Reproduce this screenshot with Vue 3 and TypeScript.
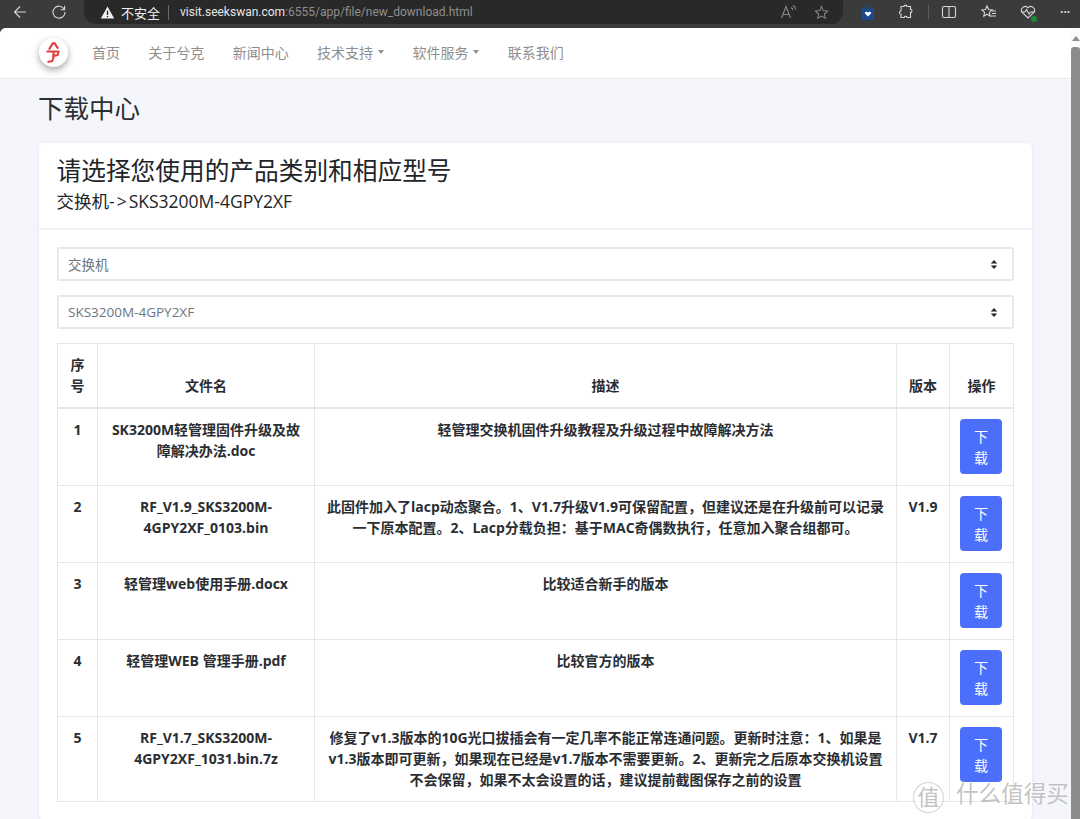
<script setup lang="ts">
interface NavItem { label: string; caret?: boolean }
interface FileRow { no: number; name: string; desc: string; version: string }

const nav: NavItem[] = [
  { label: '首页' },
  { label: '关于兮克' },
  { label: '新闻中心' },
  { label: '技术支持', caret: true },
  { label: '软件服务', caret: true },
  { label: '联系我们' },
]

const selects: string[] = ['交换机', 'SKS3200M-4GPY2XF']

const rows: FileRow[] = [
  { no: 1, name: 'SK3200M轻管理固件升级及故障解决办法.doc', desc: '轻管理交换机固件升级教程及升级过程中故障解决方法', version: '' },
  { no: 2, name: 'RF_V1.9_SKS3200M-4GPY2XF_0103.bin', desc: '此固件加入了lacp动态聚合。1、V1.7升级V1.9可保留配置，但建议还是在升级前可以记录一下原本配置。2、Lacp分载负担：基于MAC奇偶数执行，任意加入聚合组都可。', version: 'V1.9' },
  { no: 3, name: '轻管理web使用手册.docx', desc: '比较适合新手的版本', version: '' },
  { no: 4, name: '轻管理WEB 管理手册.pdf', desc: '比较官方的版本', version: '' },
  { no: 5, name: 'RF_V1.7_SKS3200M-4GPY2XF_1031.bin.7z', desc: '修复了v1.3版本的10G光口拔插会有一定几率不能正常连通问题。更新时注意：1、如果是v1.3版本即可更新，如果现在已经是v1.7版本不需要更新。2、更新完之后原本交换机设置不会保留，如果不太会设置的话，建议提前截图保存之前的设置', version: 'V1.7' },
]
</script>

<template>
  <div class="screen">
    <header class="chrome">
      <svg class="ic back" viewBox="0 0 16 16"><path d="M14 8H2.500M8 2.500 2.500 8 8 13.500" /></svg>
      <svg class="ic reload" viewBox="0 0 16 16"><path d="M13.400 5.500A6 6 0 1 0 14 8M13.600 1.800v3.900H9.800" /></svg>
      <div class="address">
        <svg class="warn" viewBox="0 0 16 16"><path d="M8 1.500 15.200 14.500H.8Z" fill="#f2f2f2" /><path d="M8 6v4.600M8 11.600v1.400" stroke="#292929" stroke-width="1.500" /></svg>
        <span class="insecure">不安全</span>
        <span class="addr-sep"></span>
        <span class="url"><b>visit.seekswan.com</b>:6555/app/file/new_download.html</span>
        <span class="grow"></span>
        <svg class="ic dim read" viewBox="0 0 18 16"><path d="M1.500 14 6 2.500 10.500 14M3 10.500h6M11 3.500c1.200.6 1.800 1.500 2 2.700M13 1.500c1.600.9 2.600 2.300 2.800 4" /></svg>
        <svg class="ic dim star" viewBox="0 0 16 16"><path d="M8 1.700 9.900 6l4.600.5-3.400 3.100 1 4.600L8 11.800l-4.100 2.400 1-4.600-3.400-3.100L6.100 6Z" /></svg>
      </div>
      <div class="tools">
        <svg class="bag" viewBox="0 0 12 15"><path d="M0 3.500h12V15H0Z" fill="#1d4a8c" /><path d="M3.800 3.500c0-3.500 4.400-3.500 4.400 0" fill="none" stroke="#1d4a8c" stroke-width="1.200" /><path d="M6 11.600 3 8.600c-.9-1.500 1.800-2.800 3-1.100 1.200-1.700 3.900-.4 3 1.100Z" fill="#fff" /></svg>
        <svg class="ic puzzle" viewBox="0 0 16 16"><path d="M6 2.500c0-1.800 3-1.800 3 0h3.500v3c1.900-.4 1.900 3.400 0 3v5H9c.3-1.700-3-1.700-2.800 0H3v-3.300c-2 .2-2-3.400 0-3.200V2.500Z" /></svg>
        <span class="tool-sep"></span>
        <svg class="ic split" viewBox="0 0 16 16"><path d="M3 2.500h10a1.500 1.500 0 0 1 1.500 1.500v8a1.500 1.500 0 0 1-1.500 1.500H3A1.500 1.500 0 0 1 1.500 12V4A1.500 1.500 0 0 1 3 2.500ZM8 2.500v11" /></svg>
        <svg class="ic favs" viewBox="0 0 16 16"><path d="M6 2 7.500 5.500l3.700.4-2.800 2.500.8 3.700L6 10.200 2.800 12.100l.8-3.700L.8 5.900l3.700-.4ZM11 7h4M11 9.500h4M10 12h5" /></svg>
        <span class="health">
          <svg class="ic" viewBox="0 0 16 16"><path d="M8 14 2.200 8.300C-.5 4.500 5 .5 8 3.800c3-3.300 8.500.7 5.800 4.500ZM1 8h4l1.500-2.500L9 10l1.500-2H15" /></svg>
          <i class="dot"></i>
        </span>
        <span class="more">···</span>
      </div>
    </header>

    <div class="viewport">
      <div class="page">
        <nav class="navbar">
          <div class="logo">
            <svg viewBox="0 0 28 28"><path d="M13.500 5 10 10.500M15 5l3 4.500M8 13h11l-1 3.500-4.500 1M14 13.500v5.500l-1.500 3.500-3.500.5" fill="none" stroke="#e23f3f" stroke-width="2" stroke-linecap="round" stroke-linejoin="round" /></svg>
          </div>
          <ul class="menu">
            <li v-for="item in nav" :key="item.label" class="menu-item">
              {{ item.label }}<span v-if="item.caret" class="caret"></span>
            </li>
          </ul>
        </nav>

        <main class="content">
          <h1 class="page-title">下载中心</h1>
          <section class="card">
            <div class="card-header">
              <h2 class="card-title">请选择您使用的产品类别和相应型号</h2>
              <p class="card-sub">交换机<span class="sub-arrow">-&gt;</span><span class="sub-model">SKS3200M-4GPY2XF</span></p>
            </div>
            <div class="card-body">
              <div v-for="s in selects" :key="s" class="select">
                <span>{{ s }}</span>
                <svg class="updown" viewBox="0 0 8 12"><path d="M4 1 7.500 5H.5ZM4 11 .5 7h7Z" fill="#212529" /></svg>
              </div>
              <table class="files">
                <colgroup>
                  <col class="c-no" /><col class="c-name" /><col class="c-desc" /><col class="c-ver" /><col class="c-op" />
                </colgroup>
                <thead>
                  <tr>
                    <th>序号</th><th>文件名</th><th>描述</th><th>版本</th><th>操作</th>
                  </tr>
                </thead>
                <tbody>
                  <tr v-for="r in rows" :key="r.no">
                    <td>{{ r.no }}</td>
                    <td>{{ r.name }}</td>
                    <td>{{ r.desc }}</td>
                    <td>{{ r.version }}</td>
                    <td class="op"><button class="dl" type="button">下载</button></td>
                  </tr>
                </tbody>
              </table>
            </div>
          </section>
        </main>
      </div>
      <aside class="scrollbar">
        <i class="arrow"></i>
        <i class="thumb"></i>
      </aside>
    </div>

    <div class="watermark">
      <span class="wm-badge">值</span>
      <span class="wm-text">什么值得买</span>
    </div>
  </div>
</template>

<style>
html, body { margin: 0; padding: 0; background: #3b3b3b; }
</style>

<style scoped>
.screen {
  position: relative;
  width: 1080px;
  height: 819px;
  overflow: hidden;
  display: flex;
  flex-direction: column;
  font-family: "Open Sans", "Noto Sans CJK SC", sans-serif;
  color: #212529;
  font-size: 14px;
}
.chrome {
  height: 28px;
  flex: none;
  background: #3b3b3b;
  display: flex;
  align-items: flex-start;
  box-sizing: border-box;
  padding-left: 12px;
}
.ic {
  fill: none;
  stroke: #d6d6d6;
  stroke-width: 1.100;
  width: 16px;
  height: 16px;
  flex: none;
}
.back { margin-top: 4px; }
.reload { margin: 4px 0 0 23px; }
.address {
  margin-left: 17px;
  width: 759px;
  height: 24px;
  flex: none;
  background: #292929;
  border-radius: 0 0 12px 12px;
  display: flex;
  align-items: center;
  padding-left: 16px;
  box-sizing: border-box;
}
.warn { width: 15px; height: 15px; flex: none; }
.insecure { margin-left: 6px; font-size: 13px; color: #efefef; white-space: nowrap; }
.addr-sep { width: 1px; height: 15px; background: #6a6a6a; margin: 0 12px 0 8px; }
.url { font-family: Roboto, sans-serif; font-size: 12px; color: #8f8f8f; white-space: nowrap; margin-left: -1px; }
.url b { font-weight: 400; color: #e6e6e6; }
.grow { flex: 1; }
.dim { stroke: #8a8a8a; }
.read { width: 18px; margin-right: 16px; }
.star { margin-right: 14px; width: 15px; height: 15px; }
.tools {
  display: flex;
  align-items: center;
  height: 24px;
  flex: 1;
  padding-left: 19px;
}
.bag { width: 12px; height: 15px; flex: none; }
.puzzle { margin-left: 24px; }
.tool-sep { width: 1px; height: 14px; background: #5c5c5c; margin: 0 12px 0 14px; }
.favs { margin-left: 24px; }
.health { position: relative; display: flex; margin-left: 23px; }
.dot {
  position: absolute;
  right: -1px;
  bottom: -2px;
  width: 6px;
  height: 6px;
  border-radius: 50%;
  background: #1e8a3a;
}
.more { margin-left: 24px; color: #d6d6d6; font-size: 12px; font-weight: 700; line-height: 1; }

.viewport { flex: 1; display: flex; min-height: 0; }
.page {
  flex: 1;
  min-width: 0;
  background: #f4f6fb;
  border-radius: 6px 0 0 0;
  overflow: hidden;
}
.navbar {
  height: 51px;
  box-sizing: border-box;
  background: #fff;
  border-bottom: 1px solid #e8eaef;
  display: flex;
  align-items: center;
  padding: 0 0 2px 39px;
}
.logo {
  width: 29px;
  height: 29px;
  margin-top: 1px;
  border-radius: 50%;
  background: #fff;
  box-shadow: 0 3px 7px rgba(0, 0, 0, 0.35);
  flex: none;
}
.logo svg { display: block; width: 29px; height: 29px; }
.menu {
  list-style: none;
  margin: 0 0 0 9.800px;
  padding: 0;
  display: flex;
}
.menu-item {
  padding: 0 14.200px;
  color: #8e8e8e;
  font-size: 14px;
  line-height: 21px;
  white-space: nowrap;
  display: flex;
  align-items: center;
}
.caret {
  margin-left: 5px;
  border-top: 4px solid #8e8e8e;
  border-left: 3.250px solid transparent;
  border-right: 3.250px solid transparent;
}
.content { padding: 0 40px 0 39px; }
.page-title {
  margin: 12px 0 18px -1px;
  font-size: 25.500px;
  line-height: 34px;
  font-weight: 400;
  color: #2b2f33;
}
.card {
  width: 993px;
  background: #fff;
  border-radius: 5px;
  box-shadow: 0 1px 4px rgba(40, 50, 80, 0.08);
}
.card-header {
  height: 87px;
  box-sizing: border-box;
  padding: 11px 18px 0 17.500px;
  border-bottom: 2px solid #f0f1f4;
}
.card-title {
  margin: 0;
  font-size: 24.700px;
  line-height: 34px;
  font-weight: 400;
}
.card-sub {
  margin: 1px 0 0;
  font-size: 17.500px;
  line-height: 24px;
}
.sub-arrow { letter-spacing: 2px; }
.sub-model { font-weight: 500; }
.card-body { padding: 17px 18px 18px; }
.select {
  height: 34px;
  box-sizing: border-box;
  border: 2px solid #e6e8ec;
  border-radius: 2px;
  margin-bottom: 14px;
  padding: 0 14px 0 9px;
  display: flex;
  align-items: center;
  justify-content: space-between;
  color: #6c757d;
  font-size: 13.500px;
}
.updown { width: 8px; height: 11px; flex: none; }
.files {
  width: 956px;
  table-layout: fixed;
  border-collapse: collapse;
  text-align: center;
  font-size: 14px;
  line-height: 21px;
  font-weight: 700;
}
.c-no { width: 40px; }
.c-name { width: 217px; }
.c-desc { width: 582px; }
.c-ver { width: 53px; }
.c-op { width: 64px; }
.files th, .files td {
  border: 1px solid #e4e6ea;
  padding: 10px 11px 11px;
  vertical-align: top;
  color: #2a2e33;
}
.files th {
  vertical-align: bottom;
  border-bottom-width: 2px;
  padding-bottom: 11px;
  padding-top: 10px;
}
.files td.op { padding-left: 10px; padding-right: 12px; }
.dl {
  display: block;
  width: 42px;
  height: 55px;
  padding: 6px 13px;
  margin: 0;
  border: 0;
  border-radius: 4px;
  background: #4b6ffb;
  color: #fff;
  font: inherit;
  font-weight: 400;
  line-height: 21px;
  box-sizing: border-box;
}
.scrollbar {
  width: 9px;
  flex: none;
  background: #fbfbfb;
  display: flex;
  flex-direction: column;
  align-items: center;
  padding-top: 8px;
  box-sizing: border-box;
}
.arrow {
  border-bottom: 5px solid #8c8c8c;
  border-left: 4px solid transparent;
  border-right: 4px solid transparent;
}
.thumb {
  margin-top: 6px;
  width: 100%;
  flex: 1;
  background: #8c8c8c;
  border-radius: 3px 3px 0 0;
}
.watermark {
  position: absolute;
  left: 913px;
  top: 779px;
  display: flex;
  align-items: center;
  gap: 12px;
  color: rgba(175, 175, 175, 0.75);
  text-shadow: 0 0 2px rgba(255, 255, 255, 0.8);
  pointer-events: none;
}
.wm-badge {
  width: 29px;
  height: 29px;
  border: 1px solid rgba(200, 200, 200, 0.8);
  border-radius: 50%;
  text-align: center;
  line-height: 27px;
  font-size: 22px;
  background: rgba(255, 255, 255, 0.5);
}
.wm-text { font-size: 22.600px; line-height: 30px; padding-bottom: 7px; white-space: nowrap; }
</style>
